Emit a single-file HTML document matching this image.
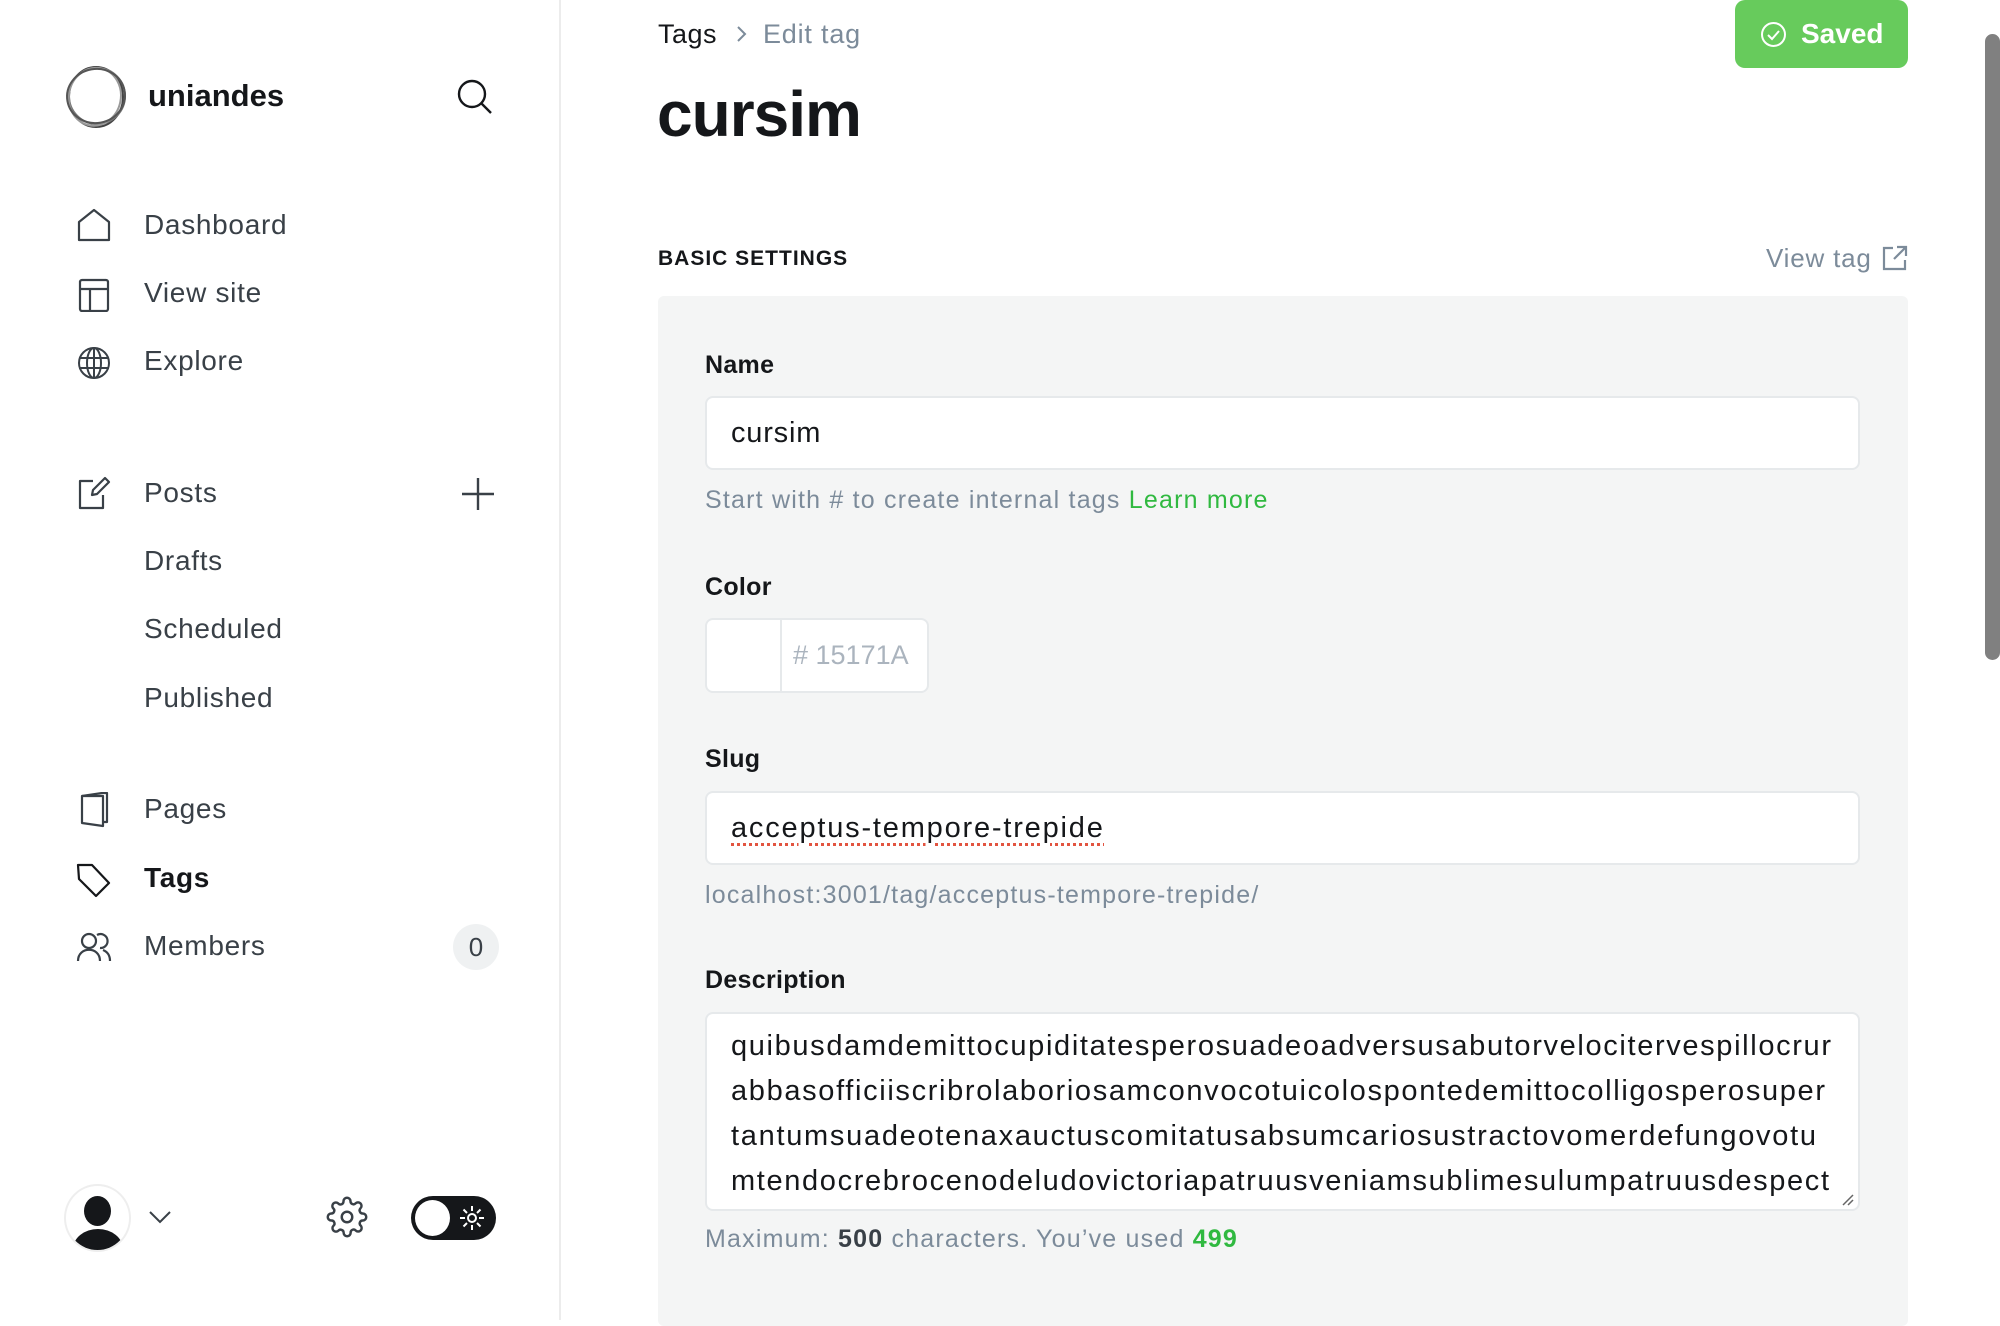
<!DOCTYPE html>
<html><head><meta charset="utf-8"><style>
*{margin:0;padding:0;box-sizing:border-box}
body{width:2000px;height:1320px;overflow:hidden;background:#fff;font-family:"Liberation Sans",sans-serif;position:relative;color:#15171a}
.a{position:absolute;white-space:nowrap}
.nav{position:absolute;left:144px;font-size:28px;color:#394047;line-height:34px;letter-spacing:0.7px}
.ic{position:absolute;left:76px}
.lbl{position:absolute;left:705px;font-size:25px;font-weight:bold;color:#15171a;line-height:30px;letter-spacing:0.3px}
.inp{position:absolute;left:705px;width:1155px;background:#fff;border:2px solid #e6e9eb;border-radius:8px}
.hint{position:absolute;left:705px;font-size:25px;color:#7c8b9a;line-height:30px;white-space:nowrap;letter-spacing:1.2px}
</style></head><body>
<!-- sidebar -->
<div class="a" style="left:559px;top:0;width:2px;height:1320px;background:#ececec"></div>
<svg class="a" style="left:62px;top:62px" width="68" height="68" viewBox="0 0 68 68" fill="none" stroke="#444" stroke-width="2">
<ellipse cx="34" cy="35" rx="27" ry="30"/><ellipse cx="35" cy="34" rx="28" ry="28" stroke="#777"/><ellipse cx="33" cy="35" rx="26" ry="29" transform="rotate(12 34 34)" stroke="#999"/><ellipse cx="34" cy="34" rx="29" ry="27" transform="rotate(-10 34 34)" stroke="#555"/></svg>
<div class="a" style="left:148px;top:78px;font-size:31px;font-weight:bold;line-height:36px">uniandes</div>
<svg class="a" style="left:455px;top:77px" width="40" height="40" viewBox="0 0 40 40" fill="none" stroke="#15171a" stroke-width="2.4"><circle cx="17" cy="17" r="13"/><line x1="26.5" y1="26.5" x2="36" y2="36"/></svg>

<svg class="ic" style="top:208px" width="36" height="34" viewBox="0 0 36 34" fill="none" stroke="#394047" stroke-width="2.2" stroke-linejoin="round"><path d="M3 14 L18 2 L33 14 V32 H3 Z"/></svg>
<div class="nav" style="top:208px">Dashboard</div>
<svg class="ic" style="top:278px" width="36" height="34" viewBox="0 0 36 34" fill="none" stroke="#394047" stroke-width="2.2"><rect x="4" y="2" width="28" height="31" rx="2"/><line x1="4" y1="11" x2="32" y2="11"/><line x1="14" y1="11" x2="14" y2="33"/></svg>
<div class="nav" style="top:276px">View site</div>
<svg class="ic" style="top:345px" width="36" height="36" viewBox="0 0 36 36" fill="none" stroke="#394047" stroke-width="2"><circle cx="18" cy="18" r="15"/><ellipse cx="18" cy="18" rx="7" ry="15"/><line x1="3" y1="13" x2="33" y2="13"/><line x1="3" y1="23" x2="33" y2="23"/><line x1="18" y1="3" x2="18" y2="33"/></svg>
<div class="nav" style="top:344px">Explore</div>

<svg class="ic" style="top:475px" width="36" height="36" viewBox="0 0 36 36" fill="none" stroke="#394047" stroke-width="2.2" stroke-linejoin="round"><path d="M17 6 H4 V33 H27 V20"/><path d="M29 3 L33 7 L21 19 L16 20 L17 15 Z"/></svg>
<div class="nav" style="top:476px">Posts</div>
<svg class="a" style="left:461px;top:477px" width="34" height="34" viewBox="0 0 34 34" stroke="#394047" stroke-width="2.4"><line x1="17" y1="1" x2="17" y2="33"/><line x1="1" y1="17" x2="33" y2="17"/></svg>
<div class="nav" style="top:544px">Drafts</div>
<div class="nav" style="top:612px">Scheduled</div>
<div class="nav" style="top:681px">Published</div>

<svg class="ic" style="top:792px" width="36" height="36" viewBox="0 0 36 36" fill="none" stroke="#394047" stroke-width="2.2" stroke-linejoin="round"><path d="M6 4 L26 1 H31 V30 H27"/><path d="M6 4 L27 4 V34 L6 31 Z"/></svg>
<div class="nav" style="top:792px">Pages</div>
<svg class="ic" style="top:862px" width="36" height="36" viewBox="0 0 36 36" fill="none" stroke="#15171a" stroke-width="2.2" stroke-linejoin="round"><path d="M2 3 H16 L33 21 L20 34 L3 17 Z"/></svg>
<div class="nav" style="top:861px;font-weight:bold;color:#15171a">Tags</div>
<svg class="ic" style="top:931px" width="36" height="34" viewBox="0 0 36 34" fill="none" stroke="#394047" stroke-width="2.2"><circle cx="13" cy="10" r="7"/><path d="M2 30 C2 15 24 15 24 30"/><path d="M21 4 A7 7 0 1 1 24 17"/><path d="M27 19 C32 21 34 25 34 30"/></svg>
<div class="nav" style="top:929px">Members</div>
<div class="a" style="left:453px;top:924px;width:46px;height:46px;border-radius:23px;background:#eff1f2;color:#394047;font-size:26px;text-align:center;line-height:46px">0</div>

<div class="a" style="left:64px;top:1184px;width:67px;height:68px;border-radius:50%;border:2px solid #eee;overflow:hidden;background:#fff">
<div style="position:absolute;left:18px;top:10px;width:27px;height:30px;border-radius:50%;background:#15171a"></div>
<div style="position:absolute;left:7px;top:43px;width:50px;height:40px;border-radius:50%;background:#15171a"></div></div>
<svg class="a" style="left:148px;top:1209px" width="24" height="16" viewBox="0 0 24 16" fill="none" stroke="#394047" stroke-width="2"><path d="M2 3 L12 13 L22 3"/></svg>
<svg class="a" style="left:326px;top:1196px" width="42" height="42" viewBox="0 0 24 24" fill="none" stroke="#394047" stroke-width="1.4"><circle cx="12" cy="12" r="3"/><path d="M19.4 15a1.65 1.65 0 0 0 .33 1.82l.06.06a2 2 0 1 1-2.83 2.83l-.06-.06a1.650 1.65 0 0 0-1.82-.33 1.65 1.65 0 0 0-1 1.51V21a2 2 0 0 1-4 0v-.09A1.65 1.65 0 0 0 9 19.4a1.65 1.65 0 0 0-1.820.33l-.06.06a2 2 0 1 1-2.83-2.83l.06-.06A1.65 1.65 0 0 0 4.68 15a1.65 1.65 0 0 0-1.51-1H3a2 2 0 0 1 0-4h.09A1.65 1.65 0 0 0 4.6 9a1.65 1.65 0 0 0-.33-1.82l-.06-.06a2 2 0 1 1 2.83-2.83l.06.06A1.65 1.65 0 0 0 9 4.68a1.65 1.65 0 0 0 1-1.51V3a2 2 0 0 1 4 0v.09a1.65 1.65 0 0 0 1 1.51 1.65 1.65 0 0 0 1.82-.33l.06-.06a2 2 0 1 1 2.83 2.83l-.06.06A1.65 1.65 0 0 0 19.4 9a1.65 1.65 0 0 0 1.51 1H21a2 2 0 0 1 0 4h-.09a1.65 1.65 0 0 0-1.51 1z"/></svg>
<div class="a" style="left:411px;top:1196px;width:85px;height:44px;border-radius:22px;background:#15171a">
<div style="position:absolute;left:4px;top:4px;width:35px;height:36px;border-radius:50%;background:#fff"></div>
<svg style="position:absolute;left:47px;top:8px" width="28" height="28" viewBox="0 0 28 28" stroke="#fff" stroke-width="2" fill="none"><circle cx="14" cy="14" r="4"/><path d="M14 2v5M14 21v5M2 14h5M21 14h5M5.5 5.5l3.5 3.5M19 19l3.5 3.5M5.5 22.5L9 19M19 9l3.5-3.5"/></svg></div>

<!-- scrollbar -->
<div class="a" style="left:1985px;top:34px;width:15px;height:626px;border-radius:8px;background:#808080"></div>

<!-- main -->
<div class="a" style="left:658px;top:18px;font-size:27px;line-height:32px;color:#15171a;letter-spacing:0.5px">Tags</div>
<svg class="a" style="left:735px;top:25px" width="14" height="18" viewBox="0 0 14 18" fill="none" stroke="#7c8b9a" stroke-width="2"><path d="M3 2 L10 9 L3 16"/></svg>
<div class="a" style="left:763px;top:18px;font-size:27px;line-height:32px;color:#7c8b9a;letter-spacing:0.8px">Edit tag</div>
<div class="a" style="left:657px;top:76px;font-size:64px;font-weight:bold;line-height:76px;letter-spacing:-1px">cursim</div>

<div class="a" style="left:1735px;top:0;width:173px;height:68px;background:#67cb5c;border-radius:10px"></div>
<svg class="a" style="left:1760px;top:21px" width="27" height="27" viewBox="0 0 27 27" fill="none" stroke="#fff" stroke-width="2"><circle cx="13.5" cy="13.5" r="11.5"/><path d="M8 14 L12 18 L19 10"/></svg>
<div class="a" style="left:1801px;top:17px;font-size:28px;font-weight:bold;color:#fff;line-height:34px">Saved</div>

<div class="a" style="left:658px;top:247px;font-size:21px;font-weight:bold;letter-spacing:1px;line-height:24px;color:#15171a">BASIC SETTINGS</div>
<div class="a" style="left:1766px;top:243px;font-size:26px;color:#7c8b9a;line-height:30px;letter-spacing:0.8px">View tag</div>
<svg class="a" style="left:1882px;top:245px" width="26" height="26" viewBox="0 0 26 26" fill="none" stroke="#7c8b9a" stroke-width="2.2"><path d="M11 3 H2 V24 H23 V15"/><path d="M15 2 H24 V11 M24 2 L12 14"/></svg>

<div class="a" style="left:658px;top:296px;width:1250px;height:1030px;background:#f4f5f5;border-radius:6px"></div>

<div class="lbl" style="top:350px">Name</div>
<div class="inp" style="top:396px;height:74px"></div>
<div class="a" style="left:731px;top:416px;font-size:29px;line-height:34px;color:#15171a;letter-spacing:0.8px">cursim</div>
<div class="hint" style="top:485px">Start with # to create internal tags <span style="color:#30b940">Learn more</span></div>

<div class="lbl" style="top:572px">Color</div>
<div class="inp" style="top:618px;height:75px;width:224px"></div>
<div class="a" style="left:780px;top:620px;width:2px;height:71px;background:#e6e9eb"></div>
<div class="a" style="left:793px;top:638px;font-size:27px;line-height:34px;color:#abb4be">#&nbsp;15171A</div>

<div class="lbl" style="top:744px">Slug</div>
<div class="inp" style="top:791px;height:74px"></div>
<div class="a" style="left:731px;top:811px;font-size:29px;line-height:34px;color:#15171a;letter-spacing:1.8px;text-decoration:underline dotted #e25440;text-underline-offset:6px">acceptus-tempore-trepide</div>
<div class="hint" style="top:880px">localhost:3001/tag/acceptus-tempore-trepide/</div>

<div class="lbl" style="top:965px">Description</div>
<div class="inp" style="top:1012px;height:199px"></div>
<svg class="a" style="left:731px;top:1018px" width="1110" height="190" font-family="Liberation Sans, sans-serif" font-size="29" fill="#15171a">
<text x="0" y="37" textLength="1100" lengthAdjust="spacing">quibusdamdemittocupiditatesperosuadeoadversusabutorvelocitervespillocrur</text>
<text x="0" y="82" textLength="1094" lengthAdjust="spacing">abbasofficiiscribrolaboriosamconvocotuicolospontedemittocolligosperosuper</text>
<text x="0" y="127" textLength="1085" lengthAdjust="spacing">tantumsuadeotenaxauctuscomitatusabsumcariosustractovomerdefungovotu</text>
<text x="0" y="172" textLength="1098" lengthAdjust="spacing">mtendocrebrocenodeludovictoriapatruusveniamsublimesulumpatruusdespect</text>
</svg>
<svg class="a" style="left:1842px;top:1194px" width="12" height="12" stroke="#666" stroke-width="1.5"><line x1="1" y1="11" x2="11" y2="1"/><line x1="6" y1="11" x2="11" y2="6"/></svg>
<div class="hint" style="top:1224px">Maximum: <b style="color:#394047">500</b> characters. You’ve used <b style="color:#30b940">499</b></div>
</body></html>
